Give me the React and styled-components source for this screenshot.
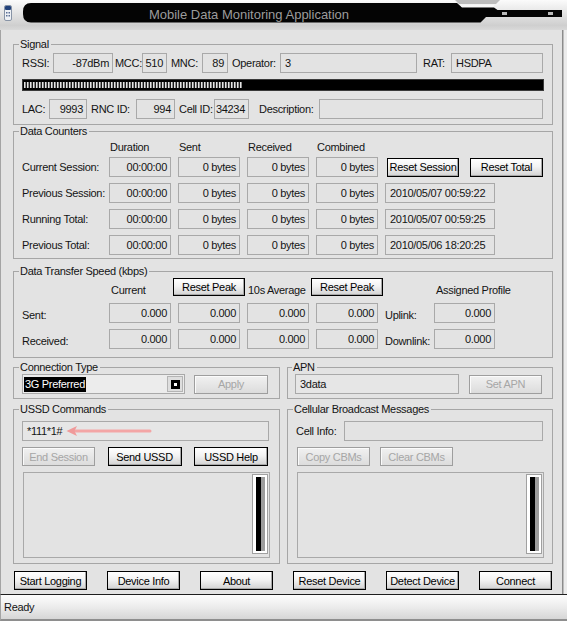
import React from 'react'
import styled, { createGlobalStyle } from 'styled-components'

const GlobalStyle = createGlobalStyle`
  html, body { margin: 0; padding: 0; background: #e3e3e3; }
  body {
    font-family: "Liberation Sans", Arial, sans-serif;
    font-size: 11px;
    letter-spacing: -0.3px;
    color: #141414;
  }
  * { box-sizing: border-box; }
`

const Window = styled.div`
  width: 567px;
  height: 621px;
  display: flex;
  flex-direction: column;
  background: #e3e3e3;
  overflow: hidden;
`

const TitleBar = styled.div`
  position: relative;
  height: 30px;
  flex: none;
  background: linear-gradient(#fbfbfb, #e6e6e6 40%, #cfcfcf 85%, #d9d9d9);
`

const TitleArt = styled.svg`
  position: absolute;
  left: 0;
  top: 0;
`

const Title = styled.div`
  position: relative;
  padding: 7px 92px 0 23px;
  text-align: center;
  font-size: 13px;
  line-height: 15px;
  letter-spacing: 0;
  color: #9c9c9c;
`

const Body = styled.div`
  flex: 1;
  display: flex;
  border-left: 1px solid #a4a4a4;
`

const Content = styled.div`
  flex: 1;
  padding: 8px 9px 0 12px;
`

const RightEdge = styled.div`
  width: 5px;
  flex: none;
  background: linear-gradient(90deg, #8c8c8c 0 1px, #bdbdbd 1px 2px, #ececec 2px);
`

const Group = styled.fieldset`
  margin: ${p => p.$mt || 0}px 0 0 0;
  padding: ${p => p.$pad || '2px 8px 5px 8px'};
  border: 1px solid #a6a6a6;
  min-width: 0;
`

const Legend = styled.legend`
  margin-left: -3px;
  padding: 0 2px 0 1px;
  line-height: 13px;
`

const Row = styled.div`
  display: flex;
  align-items: center;
  height: ${p => p.$h || 20}px;
  margin-top: ${p => p.$mt || 0}px;
  gap: ${p => p.$gap || 0}px;
`

const Label = styled.span`
  flex: none;
  width: ${p => (p.$w ? `${p.$w}px` : 'auto')};
  padding-left: ${p => p.$pl || 0}px;
  padding-top: ${p => p.$dy || 0}px;
  white-space: nowrap;
`

const Field = styled.div`
  position: relative;
  flex: none;
  width: ${p => (p.$w ? `${p.$w}px` : 'auto')};
  height: 20px;
  border: 1px solid #a9a9a9;
  background: ${p => p.$bg || '#e3e3e3'};
  display: flex;
  align-items: center;
  justify-content: ${p => (p.$left ? 'flex-start' : 'flex-end')};
  padding: 0 3px 0 ${p => (p.$left ? 4 : 2)}px;
  white-space: nowrap;
  margin-left: ${p => p.$ml || 0}px;
`

const SignalBar = styled.div`
  height: 12px;
  margin: 6px 0 8px;
  background: #000;
  border: 1px solid #3a3a3a;
  padding: 2px 1px;
`

const SignalFill = styled.div`
  height: 100%;
  background: repeating-linear-gradient(90deg, #e4e4e4 0 1px, #8a8a8a 1px 2px, #1a1a1a 2px 3px);
`

const cols = '80px 62px 62px 62px 62px 1fr'
const speedCols = '80px 62px 62px 62px 62px 42px 61px'

const Grid = styled.div`
  display: grid;
  grid-template-columns: ${p => p.$cols};
  grid-auto-rows: ${p => p.$rowH || 20}px;
  column-gap: 7px;
  row-gap: 6px;
  align-items: center;
  margin-top: ${p => p.$mt || 0}px;
`

const Head = styled.span`
  padding-left: ${p => p.$pl || 1}px;
  white-space: nowrap;
  line-height: 13px;
  align-self: ${p => (p.$end ? 'end' : 'center')};
  margin-bottom: ${p => (p.$end ? -1 : 0)}px;
`

const Button = styled.button`
  flex: none;
  width: ${p => p.$w || 73}px;
  height: ${p => p.$h || 19}px;
  margin-left: ${p => p.$ml || 0}px;
  padding: 0;
  font: inherit;
  letter-spacing: inherit;
  color: #000;
  border: 1px solid #000;
  background: linear-gradient(#ffffff, #f3f3f3 45%, #d2d2d2);
  box-shadow: inset -1px -1px 0 #a8a8a8;
  justify-self: ${p => (p.$center ? 'center' : 'auto')};
  white-space: nowrap;

  &:disabled {
    color: #a6a6a6;
    border-color: #9e9e9e;
    background: linear-gradient(#f1f1f1, #dcdcdc);
    box-shadow: inset 1px 1px 0 #fbfbfb;
  }
`

const Split = styled.div`
  display: grid;
  grid-template-columns: 267px 266px;
  column-gap: 7px;
  margin-top: ${p => p.$mt || 0}px;
`

const Combo = styled.div`
  flex: none;
  width: 163px;
  height: 20px;
  border: 1px solid #a9a9a9;
  background: #ececec;
  display: flex;
  align-items: center;
  justify-content: space-between;
  padding: 0 1px 0 1px;
`

const Selected = styled.span`
  background: #000;
  color: #fff;
  line-height: 15px;
  padding: 0 1px;
`

const DropButton = styled.div`
  width: 16px;
  height: 16px;
  border: 1px solid #b4b4b4;
  background: #dedede;
  display: flex;
  align-items: center;
  justify-content: center;

  &::after {
    content: '';
    width: 3px;
    height: 3px;
    border: 3px solid #000;
    background: #fff;
  }
`

const Stack = styled.div`
  display: flex;
  flex-direction: column;
  gap: 6px;
`

const TextArea = styled.div`
  width: 247px;
  height: 86px;
  margin-left: ${p => p.$ml || 0}px;
  border: 1px solid #a9a9a9;
  background: #e3e3e3;
  display: flex;
  justify-content: flex-end;
  padding: 1px 1px 3px;
`

const Scroll = styled.div`
  width: 16px;
  border: 1px solid #a0a0a0;
  background: #fff;
  padding: 2px 1px;

  &::after {
    content: '';
    display: block;
    height: 100%;
    background: linear-gradient(90deg, #fff 0 2px, #000 2px 7px, #9d9d9d 7px 11px, #fff 11px);
  }
`

const Arrow = styled.svg`
  position: absolute;
  left: 43px;
  top: 3px;
`

const Footer = styled.div`
  display: flex;
  gap: 20px;
  margin: 7px 0 0 1px;
`

const StatusBar = styled.div`
  flex: none;
  height: 27px;
  border-top: 1px solid #1e1e1e;
  border-bottom: 2px solid #8e8e8e;
  border-left: 1px solid #a4a4a4;
  background: linear-gradient(#fdfdfd, #ececec 50%, #d6d6d6);
  padding: 5px 0 0 3px;
  line-height: 14px;
`

const counters = [
  { label: 'Current Session:' },
  { label: 'Previous Session:', stamp: '2010/05/07 00:59:22' },
  { label: 'Running Total:', stamp: '2010/05/07 00:59:25' },
  { label: 'Previous Total:', stamp: '2010/05/06 18:20:25' },
]

const speeds = [
  { label: 'Sent:', side: 'Uplink:' },
  { label: 'Received:', side: 'Downlink:' },
]

function TitleDecor() {
  return (
    <TitleArt width="567" height="30" viewBox="0 0 567 30">
      <path d="M455 0 L459 4 H496 L500 0 Z" fill="#bdbdbd" />
      <path
        d="M31 3 H457 L462 7.5 H494 L497.5 10 H562 V17 H486 L480.5 22.5 H31 Q23 22.5 23 14 V11.5 Q23 3 31 3 Z"
        fill="#040404"
      />
      <path d="M461 6 H494" stroke="#ffffff" strokeWidth="1.2" />
      <rect x="502" y="12" width="5" height="3" fill="#b9b9b9" />
      <rect x="548" y="12" width="5" height="3" fill="#b9b9b9" />
      <rect x="4.5" y="5.5" width="7" height="15" rx="1.5" fill="#eef1f5" stroke="#8894a6" />
      <rect x="5" y="6" width="6" height="4" rx="1" fill="#23427a" />
      <rect x="6" y="12" width="1.5" height="1.5" fill="#5a6f96" />
      <rect x="8.5" y="12" width="1.5" height="1.5" fill="#5a6f96" />
      <rect x="6" y="15" width="1.5" height="1.5" fill="#5a6f96" />
      <rect x="8.5" y="15" width="1.5" height="1.5" fill="#5a6f96" />
    </TitleArt>
  )
}

export default function App() {
  return (
    <Window>
      <GlobalStyle />
      <TitleBar>
        <TitleDecor />
        <Title>Mobile Data Monitoring Application</Title>
      </TitleBar>

      <Body>
        <Content>
          <Group>
            <Legend>Signal</Legend>
            <Row>
              <Label $w={31}>RSSI:</Label>
              <Field $w={60}>-87dBm</Field>
              <Label $w={29} $pl={2}>MCC:</Label>
              <Field $w={25}>510</Field>
              <Label $w={35} $pl={4}>MNC:</Label>
              <Field $w={26}>89</Field>
              <Label $w={52} $pl={4}>Operator:</Label>
              <Field $w={137} $left>3</Field>
              <Label $w={34} $pl={6}>RAT:</Label>
              <Field $w={92} $left>HSDPA</Field>
            </Row>
            <SignalBar>
              <SignalFill style={{ width: '42%' }} />
            </SignalBar>
            <Row>
              <Label $w={27}>LAC:</Label>
              <Field $w={38}>9993</Field>
              <Label $w={49} $pl={4}>RNC ID:</Label>
              <Field $w={39}>994</Field>
              <Label $w={39} $pl={4}>Cell ID:</Label>
              <Field $w={35}>34234</Field>
              <Label $w={70} $pl={10}>Description:</Label>
              <Field $w={224} $left />
            </Row>
          </Group>

          <Group $pad="0 8px 3px 8px">
            <Legend>Data Counters</Legend>
            <Grid $cols={cols} $rowH={13} $mt={3}>
              <span />
              <Head>Duration</Head>
              <Head>Sent</Head>
              <Head>Received</Head>
              <Head>Combined</Head>
            </Grid>
            <Grid $cols={cols} $mt={3}>
              {counters.map(c => (
                <React.Fragment key={c.label}>
                  <Label>{c.label}</Label>
                  <Field>00:00:00</Field>
                  <Field>0 bytes</Field>
                  <Field>0 bytes</Field>
                  <Field>0 bytes</Field>
                  {c.stamp ? (
                    <Row>
                      <Field $w={110} $left>{c.stamp}</Field>
                    </Row>
                  ) : (
                    <Row>
                      <Button $w={72} $ml={2}>Reset Session</Button>
                      <Button $w={73} $ml={11}>Reset Total</Button>
                    </Row>
                  )}
                </React.Fragment>
              ))}
            </Grid>
          </Group>

          <Group $mt={6} $pad="0 8px 8px 8px">
            <Legend>Data Transfer Speed (kbps)</Legend>
            <Grid $cols={speedCols} $rowH={18}>
              <span />
              <Head $end $pl={2}>Current</Head>
              <Button $w={72} $h={18} $center>Reset Peak</Button>
              <Head $end>10s Average</Head>
              <Button $w={72} $h={18} $center>Reset Peak</Button>
              <span />
              <Head $end $pl={2}>Assigned Profile</Head>
            </Grid>
            <Grid $cols={speedCols} $mt={7}>
              {speeds.map(s => (
                <React.Fragment key={s.label}>
                  <Label $dy={3}>{s.label}</Label>
                  <Field>0.000</Field>
                  <Field>0.000</Field>
                  <Field>0.000</Field>
                  <Field>0.000</Field>
                  <Label $dy={3}>{s.side}</Label>
                  <Field>0.000</Field>
                </React.Fragment>
              ))}
            </Grid>
          </Group>

          <Split $mt={3}>
            <Group $pad="0 8px 4px 8px">
              <Legend>Connection Type</Legend>
              <Row $gap={9}>
                <Combo>
                  <Selected>3G Preferred</Selected>
                  <DropButton />
                </Combo>
                <Button $w={74} disabled>Apply</Button>
              </Row>
            </Group>
            <Group $pad="0 8px 4px 7px">
              <Legend>APN</Legend>
              <Row $gap={10}>
                <Field $w={164} $left $bg="#e6e6e6">3data</Field>
                <Button disabled>Set APN</Button>
              </Row>
            </Group>
          </Split>

          <Split $mt={4}>
            <Group $pad="5px 8px 5px 8px">
              <Legend>USSD Commands</Legend>
              <Stack>
                <Field $w={247} $left $bg="#e6e6e6">
                  *111*1#
                  <Arrow width="86" height="12" viewBox="0 0 86 12">
                    <path d="M8 6 H84" stroke="#f3a5a5" strokeWidth="3" strokeLinecap="round" />
                    <path d="M0.5 6 L11 1 L8.5 6 L11 11 Z" fill="#f09a9a" />
                  </Arrow>
                </Field>
                <Row $h={19} style={{ width: 246, justifyContent: 'space-between' }}>
                  <Button disabled>End Session</Button>
                  <Button $w={74}>Send USSD</Button>
                  <Button $w={74}>USSD Help</Button>
                </Row>
                <TextArea $ml={1}>
                  <Scroll />
                </TextArea>
              </Stack>
            </Group>
            <Group $pad="5px 8px 5px 8px">
              <Legend>Cellular Broadcast Messages</Legend>
              <Stack>
                <Row>
                  <Label $w={48}>Cell Info:</Label>
                  <Field $w={199} $left />
                </Row>
                <Row $h={19} $gap={10}>
                  <Button $ml={1} disabled>Copy CBMs</Button>
                  <Button disabled>Clear CBMs</Button>
                </Row>
                <TextArea $ml={1}>
                  <Scroll />
                </TextArea>
              </Stack>
            </Group>
          </Split>

          <Footer>
            <Button>Start Logging</Button>
            <Button>Device Info</Button>
            <Button>About</Button>
            <Button>Reset Device</Button>
            <Button>Detect Device</Button>
            <Button>Connect</Button>
          </Footer>
        </Content>
        <RightEdge />
      </Body>

      <StatusBar>Ready</StatusBar>
    </Window>
  )
}
